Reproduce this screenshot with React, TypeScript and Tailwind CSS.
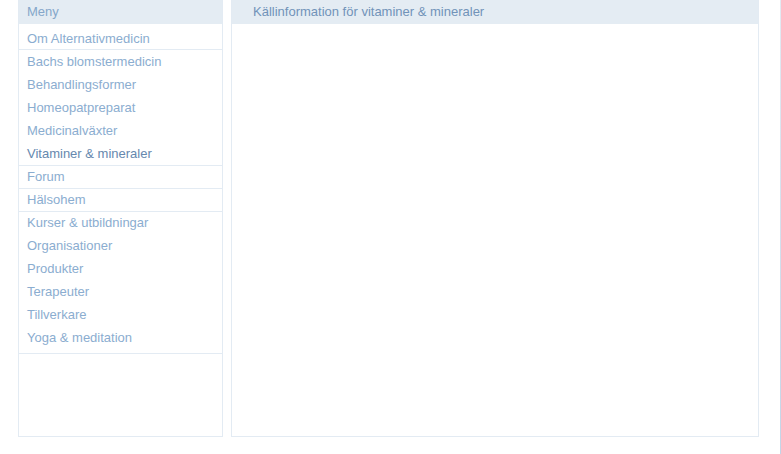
import React from "react";

const items: { label: string; active?: boolean; topBorder?: boolean; bottomBorder?: boolean }[] = [
  { label: "Om Alternativmedicin", bottomBorder: true },
  { label: "Bachs blomstermedicin" },
  { label: "Behandlingsformer" },
  { label: "Homeopatpreparat" },
  { label: "Medicinalväxter" },
  { label: "Vitaminer & mineraler", active: true },
  { label: "Forum", topBorder: true },
  { label: "Hälsohem", topBorder: true },
  { label: "Kurser & utbildningar", topBorder: true },
  { label: "Organisationer" },
  { label: "Produkter" },
  { label: "Terapeuter" },
  { label: "Tillverkare" },
  { label: "Yoga & meditation" },
];

export default function App() {
  return (
    <div
      className="relative h-[454px] w-[781px] overflow-hidden bg-white text-[13px]"
      style={{ fontFamily: '"Liberation Sans", Arial, sans-serif' }}
    >
      <div className="flex gap-[8px] pl-[18px]">
        <aside className="flex h-[437px] w-[205px] flex-col border-x border-b border-[#e3ebf3]">
          <div className="flex h-[24px] items-center bg-[#e4ecf3] pl-[8px] text-[#85a7ca]">Meny</div>
          <ul className="border-b border-[#e3ebf3] pt-[3px] pb-[4px]">
            {items.map((it) => (
              <li
                key={it.label}
                className={
                  "box-border flex h-[23px] items-center pl-[8px] " +
                  (it.active ? "text-[#6688ae] " : "text-[#8badd0] ") +
                  (it.topBorder ? "border-t border-[#e3ebf3] " : "") +
                  (it.bottomBorder ? "border-b border-[#e3ebf3] " : "")
                }
              >
                <span className={it.bottomBorder ? "mt-[1px]" : it.topBorder ? "-mt-[1px]" : ""}>{it.label}</span>
              </li>
            ))}
          </ul>
        </aside>
        <main className="flex h-[437px] w-[528px] flex-col border-x border-b border-[#e3ebf3]">
          <div className="flex h-[24px] items-center bg-[#e4ecf3] pl-[21px] text-[#7193b9]">
            Källinformation för vitaminer &amp; mineraler
          </div>
        </main>
      </div>
      <div className="absolute right-0 top-0 h-[454px] w-[1px] bg-gradient-to-b from-[#e3ebf3] to-[#c4d5e7]" />
    </div>
  );
}
